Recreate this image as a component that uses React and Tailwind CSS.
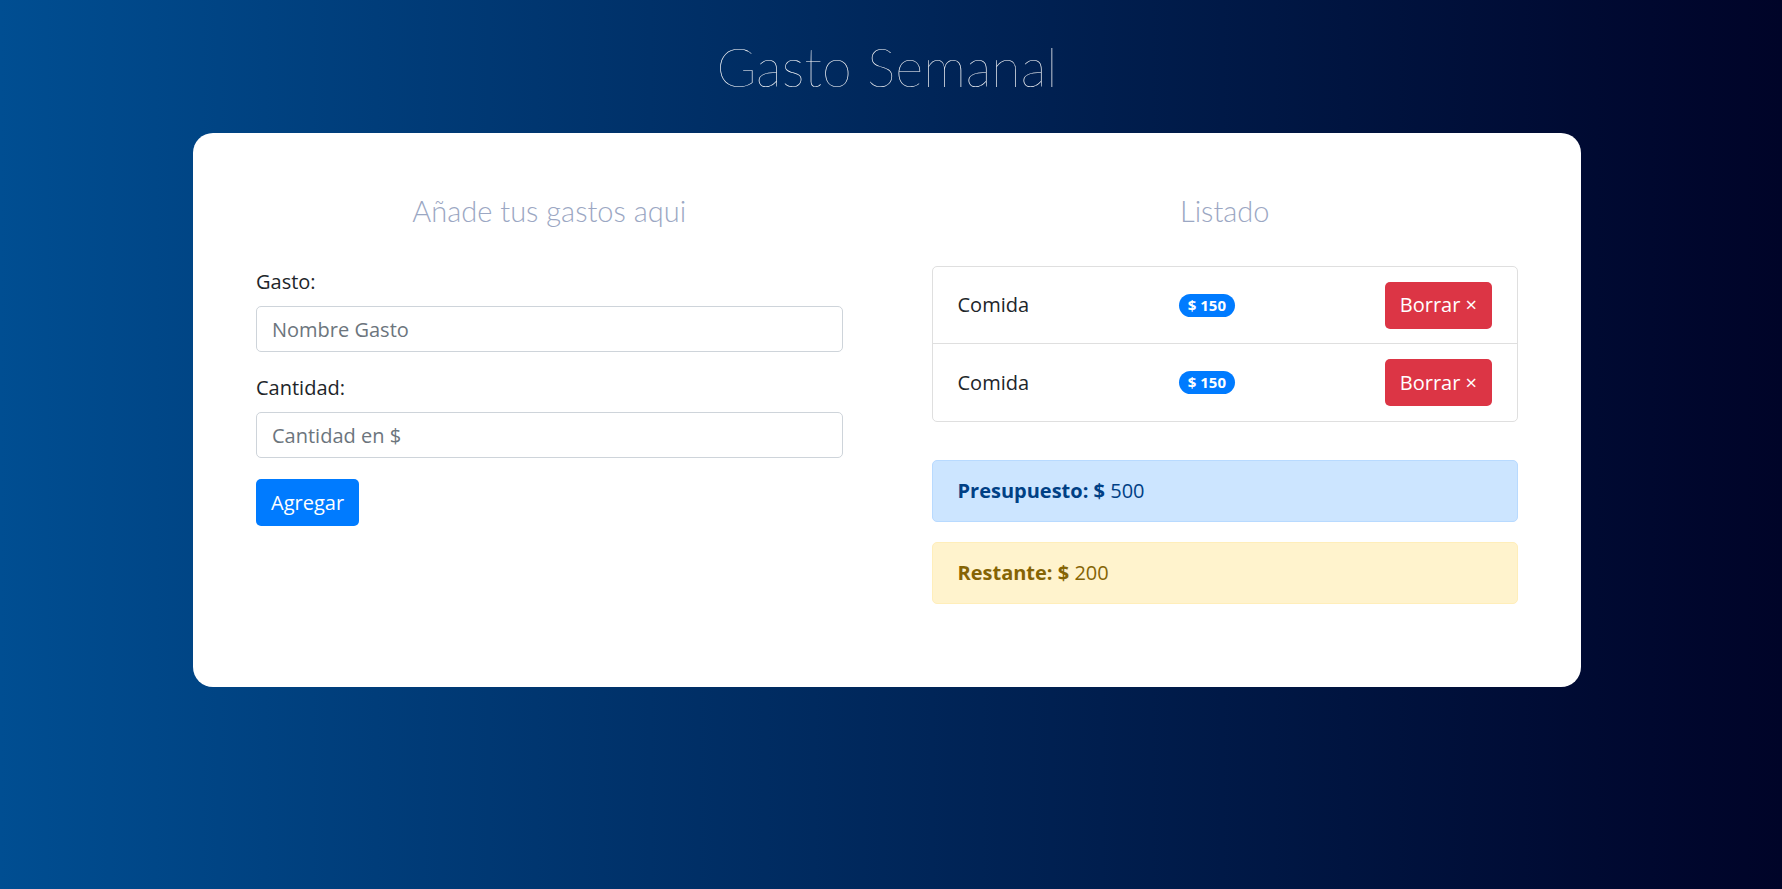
import { useState } from 'react'

const gastos = [
  { id: 1, nombre: 'Comida', cantidad: 150 },
  { id: 2, nombre: 'Comida', cantidad: 150 },
]

const body = "font-['Open_Sans','Liberation_Sans',sans-serif]"
const thin = "font-['Lato','Liberation_Sans',sans-serif]"

function Heading({ children }) {
  return (
    <h2 className={`${thin} font-light text-[29px] leading-[36px] text-center text-[#9ba7c3]`}>
      {children}
    </h2>
  )
}

function Field({ label, placeholder, value, onChange }) {
  return (
    <div className="mb-[21px]">
      <label className="block text-[20px] leading-[30px] text-[#212529] mb-[9px]">{label}</label>
      <input
        className="block w-full h-[46px] px-[15px] text-[20px] rounded-[5px] border border-[#ced4da] text-[#495057] placeholder:text-[#6c757d] outline-none"
        placeholder={placeholder}
        value={value}
        onChange={e => onChange(e.target.value)}
      />
    </div>
  )
}

export default function App() {
  const [nombre, setNombre] = useState('')
  const [cantidad, setCantidad] = useState('')

  return (
    <div className={`min-h-screen bg-linear-to-r from-[#004e92] to-[#000428] pr-[8px] ${body}`}>
      <h1 className={`${thin} font-extralight text-white text-[54px] leading-[67px] text-center pt-[33px] mb-[33px]`}>
        Gasto Semanal
      </h1>

      <div className="mx-auto w-[1388px] bg-white rounded-[20px] pt-[60px] pb-[83px] px-[63px] grid grid-cols-2 gap-x-[89px] items-start">
        <div>
          <Heading>Añade tus gastos aqui</Heading>
          <form className="mt-[38px]" onSubmit={e => e.preventDefault()}>
            <Field label="Gasto:" placeholder="Nombre Gasto" value={nombre} onChange={setNombre} />
            <Field label="Cantidad:" placeholder="Cantidad en $" value={cantidad} onChange={setCantidad} />
            <button className="h-[47px] px-[15px] rounded-[5px] bg-[#007bff] text-white text-[20px]">
              Agregar
            </button>
          </form>
        </div>

        <div>
          <Heading>Listado</Heading>
          <ul className="mt-[37px] border border-[#dfdfdf] rounded-[5px]">
            {gastos.map((g, i) => (
              <li
                key={g.id}
                className={`h-[77px] px-[25px] flex items-center justify-between text-[20px] text-[#212529] ${i < gastos.length - 1 ? 'border-b border-[#dfdfdf]' : ''}`}
              >
                <span>{g.nombre}</span>
                <span className="rounded-full bg-[#007bff] text-white font-bold text-[15px] leading-none px-[9px] py-[4px]">
                  $ {g.cantidad}
                </span>
                <button className="h-[47px] px-[15px] rounded-[5px] bg-[#dc3545] text-white text-[20px]">
                  Borrar ×
                </button>
              </li>
            ))}
          </ul>

          <div className="mt-[38px] rounded-[5px] border border-[#b8daff] bg-[#cce5ff] text-[#004085] px-[25px] py-[15px] text-[20px] leading-[30px]">
            <span className="font-bold">Presupuesto: $</span> 500
          </div>
          <div className="mt-[20px] rounded-[5px] border border-[#ffeeba] bg-[#fff3cd] text-[#856404] px-[25px] py-[15px] text-[20px] leading-[30px]">
            <span className="font-bold">Restante: $</span> 200
          </div>
        </div>
      </div>
    </div>
  )
}
